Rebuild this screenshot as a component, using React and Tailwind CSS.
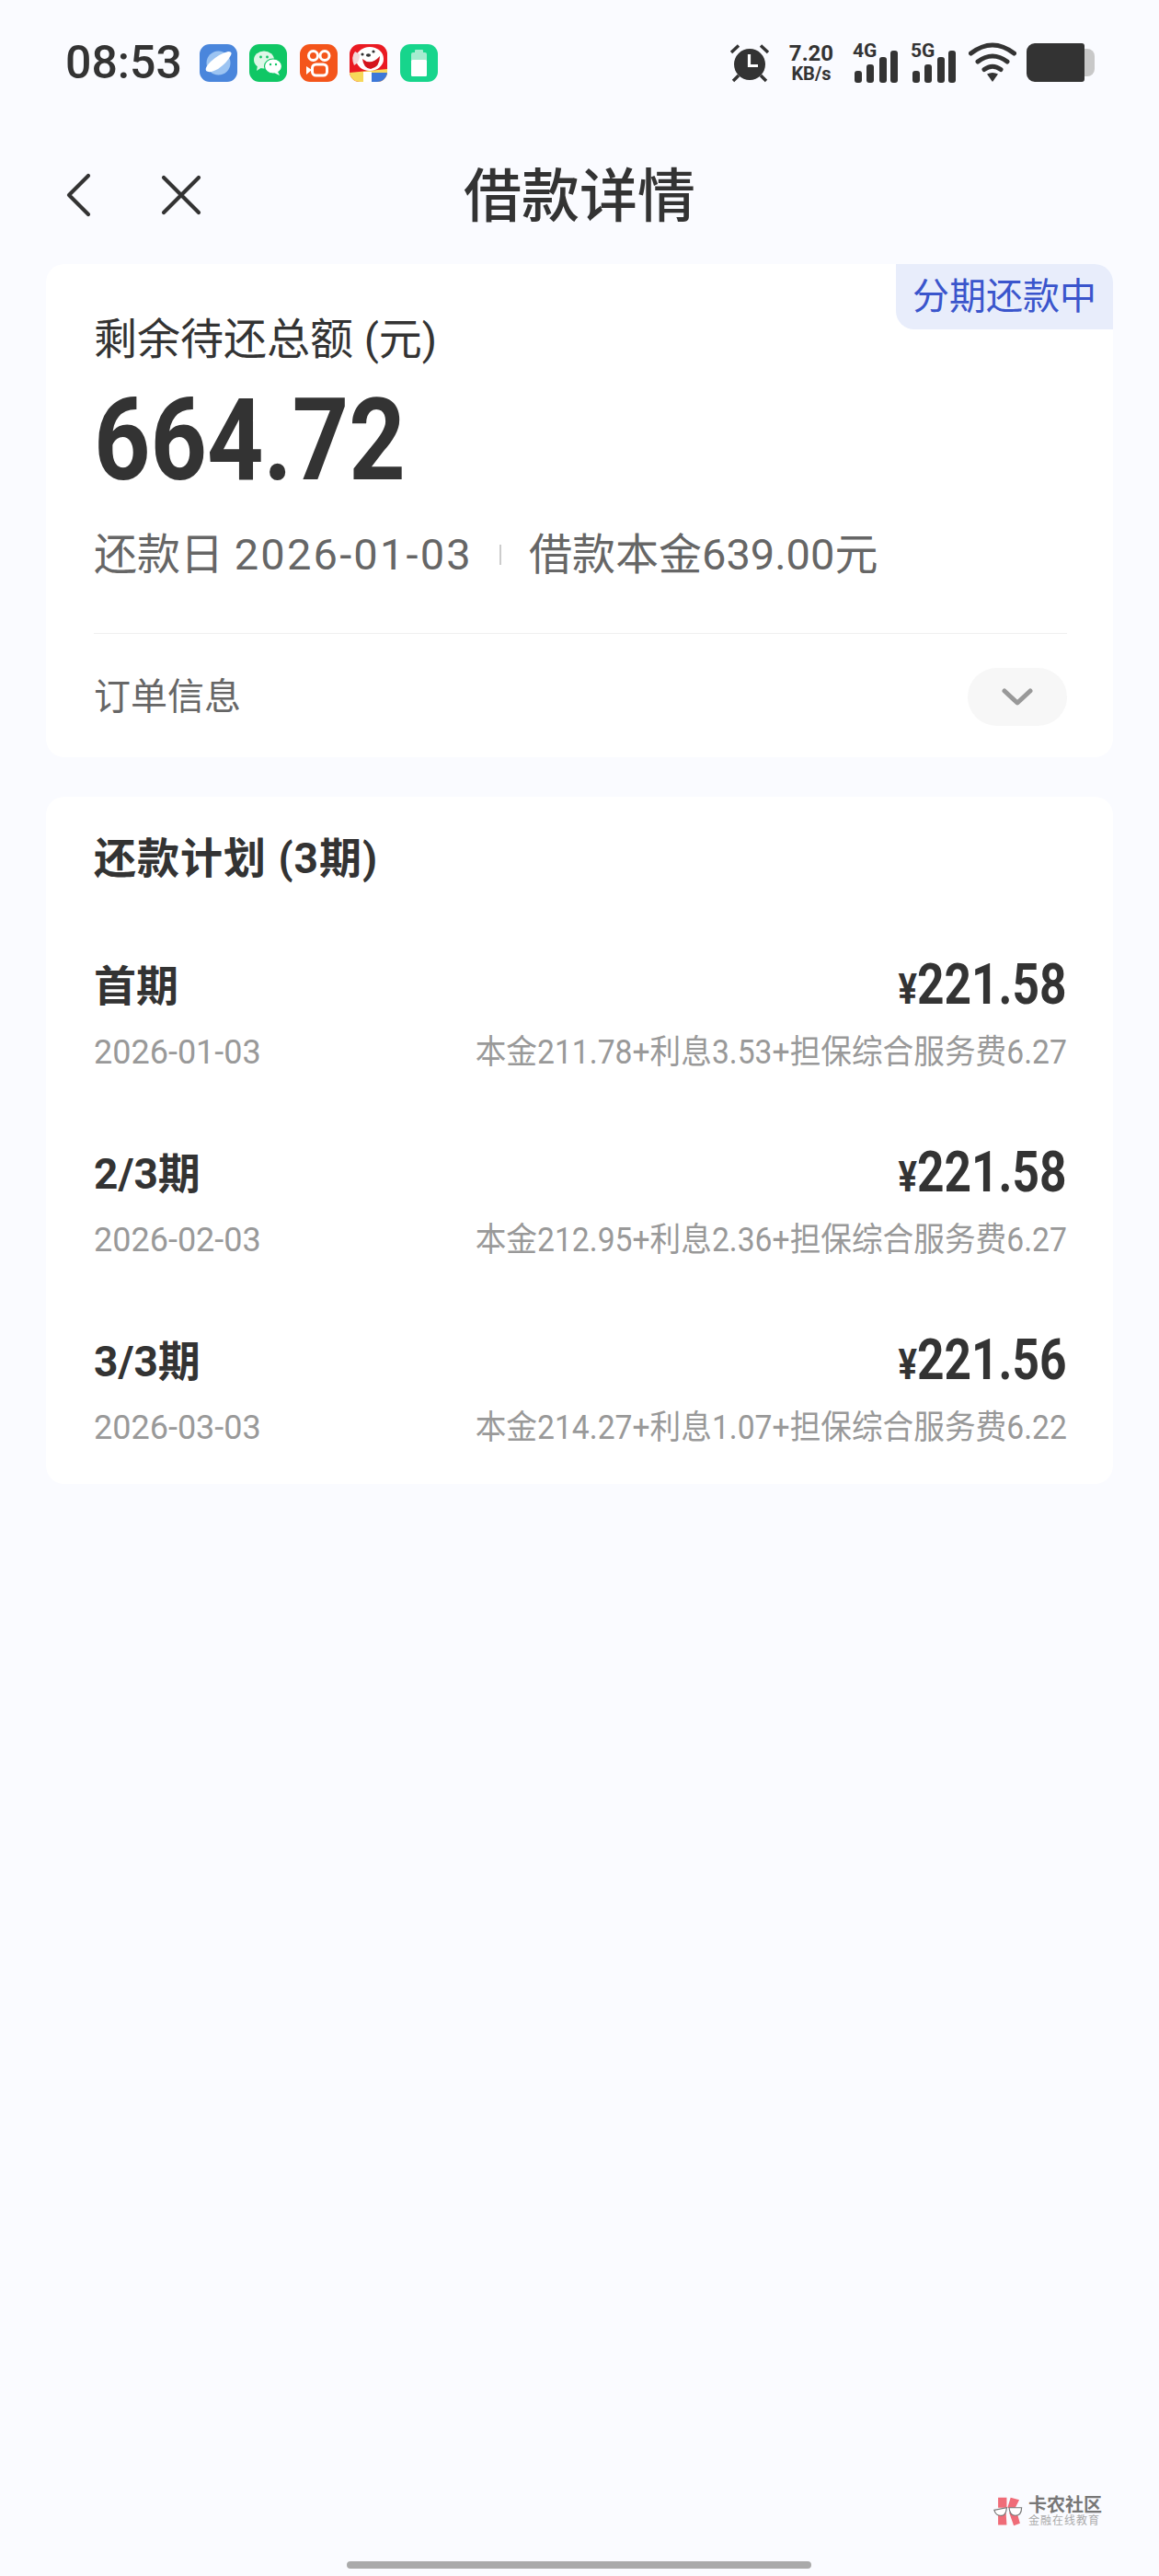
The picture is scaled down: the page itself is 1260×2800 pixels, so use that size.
const CJK = 'font-["Roboto","Noto_Sans_CJK_SC",sans-serif]'

const plans = [
  { name: '首期', amount: '221.58', date: '2026-01-03', detail: '本金211.78+利息3.53+担保综合服务费6.27' },
  { name: '2/3期', amount: '221.58', date: '2026-02-03', detail: '本金212.95+利息2.36+担保综合服务费6.27' },
  { name: '3/3期', amount: '221.56', date: '2026-03-03', detail: '本金214.27+利息1.07+担保综合服务费6.22' },
]

function AppIcon({ className, children }) {
  return (
    <div className={`w-[41px] h-[41px] rounded-[11px] overflow-hidden shrink-0 ${className}`}>
      <svg viewBox="0 0 41 41" className="w-full h-full">{children}</svg>
    </div>
  )
}

function StatusIcons() {
  return (
    <div className="flex items-center gap-[13.5px] ml-[19px]">
      <AppIcon className="bg-[#4a86dc]">
        <circle cx="20.5" cy="20.5" r="13" fill="#9cc4f2" />
        <path d="M7 29 Q5 26 12 19 Q22 10 31 8 Q36 8 34 12 Q30 20 20 27 Q11 32 7 29Z" fill="#fff" />
      </AppIcon>
      <AppIcon className="bg-[#10c765]">
        <ellipse cx="16" cy="17" rx="11" ry="9.5" fill="#dff7e8" />
        <path d="M9 23 L8 29 L14 25Z" fill="#dff7e8" />
        <ellipse cx="26" cy="24" rx="9.5" ry="8" fill="#fff" stroke="#10c765" strokeWidth="1.2" />
        <path d="M31 30 L33 34 L27 31Z" fill="#fff" />
        <circle cx="12.5" cy="14" r="1.4" fill="#10c765" />
        <circle cx="19.5" cy="14" r="1.4" fill="#10c765" />
        <circle cx="23" cy="22" r="1.2" fill="#10c765" />
        <circle cx="29" cy="22" r="1.2" fill="#10c765" />
      </AppIcon>
      <AppIcon className="bg-[#f4551b]">
        <circle cx="14.5" cy="12.5" r="5" fill="none" stroke="#fff" strokeWidth="3" />
        <circle cx="27" cy="12.5" r="5" fill="none" stroke="#fff" strokeWidth="3" />
        <rect x="13.5" y="22" width="16" height="12" rx="4" fill="none" stroke="#fff" strokeWidth="3" />
        <path d="M13 28 L7 24 V33Z" fill="#fff" />
      </AppIcon>
      <AppIcon className="bg-[#ea1a22]">
        <path d="M0 31 L41 27 V41 H0Z" fill="#f7d85a" />
        <rect x="24" y="31" width="17" height="10" fill="#3d78d8" />
        <rect x="15" y="30" width="9" height="11" fill="#fff" />
        <ellipse cx="22" cy="16" rx="15" ry="13" fill="#fff" />
        <path d="M6 8 Q1 14 5 23 Q11 20 11 11Z" fill="#f3d9d9" />
        <path d="M14 16 Q23 24 33 13 Q33 25 23 27 Q15 26 14 16Z" fill="#d4141c" />
        <circle cx="14" cy="11" r="1.6" fill="#333" />
        <circle cx="26" cy="8" r="1.6" fill="#333" />
        <ellipse cx="20.5" cy="12" rx="2.6" ry="1.8" fill="#333" />
      </AppIcon>
      <AppIcon className="bg-[#17d58c]">
        <rect x="16" y="6" width="9" height="4" rx="1" fill="#a6ecd0" />
        <rect x="12" y="9" width="17" height="26" rx="2" fill="#a6ecd0" />
        <rect x="12" y="17" width="17" height="18" rx="1.5" fill="#fff" />
      </AppIcon>
    </div>
  )
}

function Bars({ label }) {
  return (
    <div className="relative w-[50px] h-[44px]">
      <span className="absolute left-0 top-[-3px] text-[21px] leading-[24px] font-bold text-[#333]">{label}</span>
      <svg viewBox="0 0 50 44" className="absolute inset-0 w-full h-full">
        <rect x="2" y="31" width="8" height="13" rx="3" fill="#333" />
        <rect x="15" y="24" width="8" height="20" rx="3" fill="#333" />
        <rect x="29" y="16" width="8" height="28" rx="3" fill="#333" />
        <rect x="41" y="9" width="8" height="35" rx="3" fill="#333" />
      </svg>
    </div>
  )
}

function StatusRight() {
  return (
    <div className="flex items-center">
      <svg viewBox="0 0 44 44" className="w-[44px] h-[44px]">
        <circle cx="22" cy="24" r="17" fill="#333" />
        <path d="M21.5 13 V25.5 H31" fill="none" stroke="#fff" strokeWidth="3.2" />
        <path d="M2 11 L10 3.5 M42 11 L34 3.5 M4 42 L10 36 M40 42 L34 36" stroke="#333" strokeWidth="3.4" />
      </svg>
      <div className="ml-[18px] w-[54px] text-[#333] font-bold text-center">
        <div className="text-[24px] leading-[24px]">7.20</div>
        <div className="text-[20px] leading-[21px]">KB/s</div>
      </div>
      <div className="ml-[18px]"><Bars label="4G" /></div>
      <div className="ml-[13px]"><Bars label="5G" /></div>
      <svg viewBox="0 0 52 44" className="w-[52px] h-[44px] ml-[13px]">
        <path d="M2.5 12 Q26 -6 49.5 12" fill="none" stroke="#333" strokeWidth="5" strokeLinecap="round" />
        <path d="M10 21 Q26 9 42 21" fill="none" stroke="#333" strokeWidth="5" strokeLinecap="round" />
        <path d="M17 29.5 Q26 23 35 29.5" fill="none" stroke="#333" strokeWidth="5" strokeLinecap="round" />
        <path d="M20 34.5 Q26 31.5 32 34.5 L26 43Z" fill="#333" />
      </svg>
      <div className="ml-[11px] flex items-center">
        <div className="w-[63px] h-[42px] bg-[#333] rounded-l-[9px] rounded-r-[3px]" />
        <div className="w-[11px] h-[30px] bg-[#c8c8c8] rounded-r-[8px]" />
      </div>
    </div>
  )
}

function Logo() {
  return (
    <svg viewBox="0 0 40 38" className="w-[34px] h-[34px]">
      <path d="M6 1 L17 1 L17 14 L6 14Z M22 1 L33 4 L27 16 L18 14Z M6 20 L16 20 L17 36 L6 36Z M20 20 L30 20 L34 34 L26 37Z" fill="#ef6c78" />
      <path d="M1 17 L17 14 Q16 25 9 24 Q3 24 1 17Z M20 14 L36 14 Q36 24 28 24 Q21 24 20 14Z" fill="#fff" stroke="#777" strokeWidth="1.4" />
    </svg>
  )
}

export default function App() {
  return (
    <div className={`relative h-[2800px] bg-[#fafbff] text-[#333] ${CJK}`}>
      {/* Status bar */}
      <div className="h-[136px] flex items-center justify-between pl-[71px] pr-[70px]">
        <div className="flex items-center">
          <span className="text-[50px] leading-none font-medium text-[#333]">08:53</span>
          <StatusIcons />
        </div>
        <StatusRight />
      </div>

      {/* Nav */}
      <div className="relative h-[151px] flex items-center justify-center">
        <div className="absolute left-[71px] top-0 h-full flex items-center gap-[76px]">
          <svg viewBox="0 0 28 48" className="w-[28px] h-[48px]">
            <path d="M25 3 L4 24 L25 45" fill="none" stroke="#333" strokeWidth="4.2" strokeLinecap="round" strokeLinejoin="round" />
          </svg>
          <svg viewBox="0 0 44 44" className="w-[44px] h-[44px]">
            <path d="M3 3 L41 41 M41 3 L3 41" fill="none" stroke="#333" strokeWidth="4.2" strokeLinecap="round" />
          </svg>
        </div>
        <h1 className="pt-[3px] text-[63px] leading-none font-medium text-[#333]">借款详情</h1>
      </div>

      {/* Summary card */}
      <div className="relative mx-[50px] bg-white rounded-[20px] pl-[52px] pr-[50px] pt-[52px] pb-[34px]">
        <div className="absolute right-0 top-0 w-[236px] h-[71px] bg-[#e8edfb] rounded-tr-[20px] rounded-bl-[20px] flex items-center justify-center text-[40px] leading-none text-[#3a55cc]">
          分期还款中
        </div>
        <div className="text-[47px] leading-[60px] text-[#333]">剩余待还总额 (元)</div>
        <div className="mt-[30px] text-[124px] leading-[100px] font-bold origin-left scale-x-[0.865]">664.72</div>
        <div className="mt-[44px] flex items-center text-[47px] leading-[60px] text-[#666]">
          <span>还款日 <span className="tracking-[2.2px]">2026-01-03</span></span>
          <span className="w-[2px] h-[22px] bg-[#ccc] ml-[29px] mr-[30px]" />
          <span>借款本金639.00元</span>
        </div>
        <div className="mt-[55px] h-px bg-[#f0f0f0]" />
        <div className="mt-[37px] flex items-center justify-between">
          <span className="text-[40px] leading-[63px] text-[#666]">订单信息</span>
          <div className="w-[108px] h-[63px] rounded-full bg-[#f7f7f7] flex items-center justify-center">
            <svg viewBox="0 0 34 20" className="w-[34px] h-[20px]">
              <path d="M3 3 L17 16 L31 3" fill="none" stroke="#999" strokeWidth="5" strokeLinecap="round" strokeLinejoin="round" />
            </svg>
          </div>
        </div>
      </div>

      {/* Repayment plan */}
      <div className="mt-[43px] mx-[50px] bg-white rounded-[20px] pl-[52px] pr-[50px] pt-[37px] pb-[41px]">
        <div className="text-[46px] leading-[60px] font-bold tracking-[1px] text-[#333]">还款计划 (3期)</div>
        <div className="mt-[79px] flex flex-col gap-[82px]">
          {plans.map((p) => (
            <div key={p.date}>
              <div className="flex items-center justify-between h-[60px]">
                <span className="text-[46px] leading-[60px] font-bold">{p.name}</span>
                <span className="text-[62px] leading-[60px] font-bold origin-right scale-x-[0.83]">
                  <span className="text-[46px]">¥</span>{p.amount}
                </span>
              </div>
              <div className="mt-[22px] flex items-center justify-between text-[36px] leading-[40px] text-[#999]">
                <span>{p.date}</span>
                <span className="origin-right scale-x-[0.935]">{p.detail}</span>
              </div>
            </div>
          ))}
        </div>
      </div>

      {/* Watermark */}
      <div className="absolute left-[1080px] top-[2713px] flex items-center gap-[4px]">
        <Logo />
        <div>
          <div className="text-[20px] leading-[20px] font-bold text-[#777]">卡农社区</div>
          <div className="text-[12px] leading-[14px] tracking-[1px] text-[#aaa]">金融在线教育</div>
        </div>
      </div>

      {/* Home indicator */}
      <div className="absolute left-[377px] top-[2784px] w-[505px] h-[8px] rounded-full bg-[#aaa]" />
    </div>
  )
}
